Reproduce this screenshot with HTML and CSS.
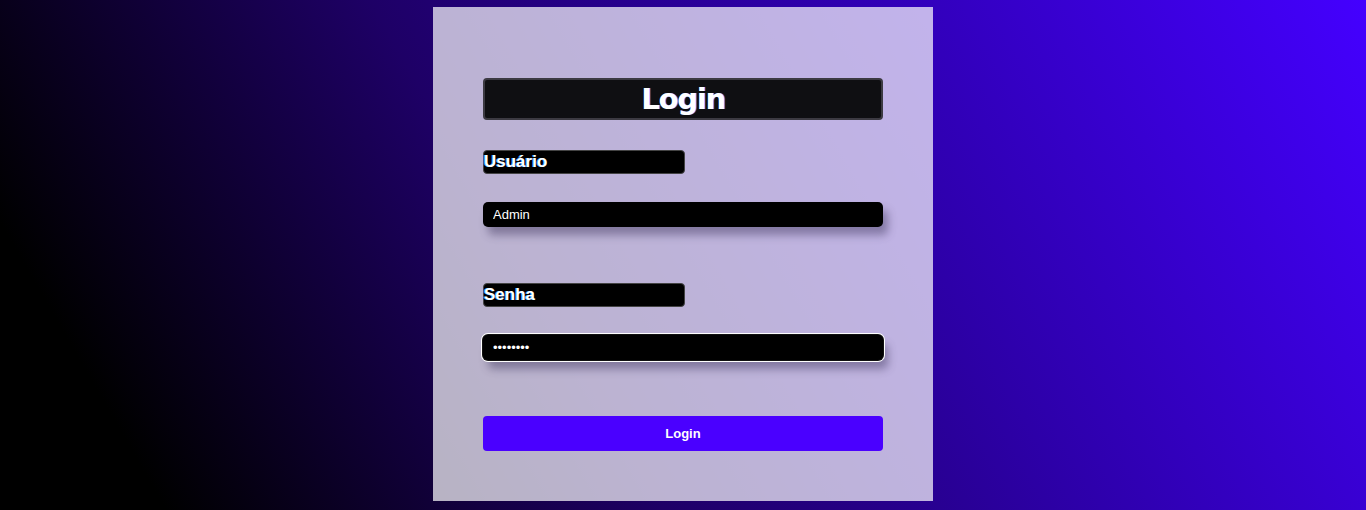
FILE: index.html
```html
<!DOCTYPE html>
<html lang="pt">
<head>
<meta charset="utf-8">
<title>Login</title>
<link rel="stylesheet" href="styles.css">
</head>
<body>
<main class="card">
  <h1 class="title">Login</h1>
  <form class="form">
    <label class="label" for="user">Usuário</label>
    <input class="field" id="user" type="text" value="Admin">
    <label class="label label-pass" for="pass">Senha</label>
    <input class="field field-focus" id="pass" type="password" value="12345678">
    <button class="btn" type="button">Login</button>
  </form>
</main>
</body>
</html>
```
FILE: styles.css
```css
html, body {
  margin: 0;
  height: 100%;
}
body {
  background: linear-gradient(60deg, #000 10%, #1e0066 40%, #2d00a8 65%, #4400ff 100%);
  font-family: "Liberation Sans", Arial, sans-serif;
  display: flex;
  justify-content: center;
  align-items: flex-start;
  padding-top: 7px;
  box-sizing: border-box;
}
.card {
  width: 500px;
  height: 494px;
  box-sizing: border-box;
  padding: 71px 50px 0;
  background: rgba(255, 255, 255, 0.7);
}
.title {
  margin: 0;
  height: 42px;
  box-sizing: border-box;
  background: #0f0f12;
  border: 2px solid #3c3a42;
  border-radius: 4px;
  color: #fff;
  text-align: center;
  font-family: "DejaVu Sans", sans-serif;
  font-weight: bold;
  font-size: 29px;
  line-height: 38px;
  letter-spacing: -1.2px;
  text-shadow: 1px 0 0 #6a7cff;
}
.form {
  display: flex;
  flex-direction: column;
  align-items: flex-start;
  margin-top: 30px;
}
.label {
  width: 202px;
  height: 24px;
  box-sizing: border-box;
  background: #000;
  border: 1px solid #444;
  border-radius: 4px;
  color: #fff;
  font-weight: bold;
  font-size: 17px;
  line-height: 22px;
  text-shadow: -1px 0 0 #3aa0ff;
}
.label-pass {
  margin-top: 56px;
}
.field {
  margin-top: 28px;
  width: 400px;
  height: 25px;
  box-sizing: border-box;
  background: #000;
  border: none;
  border-radius: 5px;
  padding: 0 10px;
  color: #fff;
  font-family: "Liberation Sans", Arial, sans-serif;
  font-size: 13px;
  box-shadow: 5px 8px 8px rgba(60, 50, 90, 0.45);
  outline: none;
}
.field-focus {
  box-shadow: 0 0 0 1px #111, 0 0 0 2px #fff, 5px 9px 8px rgba(60, 50, 90, 0.45);
}
.btn {
  margin-top: 56px;
  width: 400px;
  height: 35px;
  background: #4a00ff;
  border: none;
  border-radius: 4px;
  color: #fff;
  font-family: "Liberation Sans", Arial, sans-serif;
  font-size: 13px;
  font-weight: bold;
  cursor: pointer;
}
```
